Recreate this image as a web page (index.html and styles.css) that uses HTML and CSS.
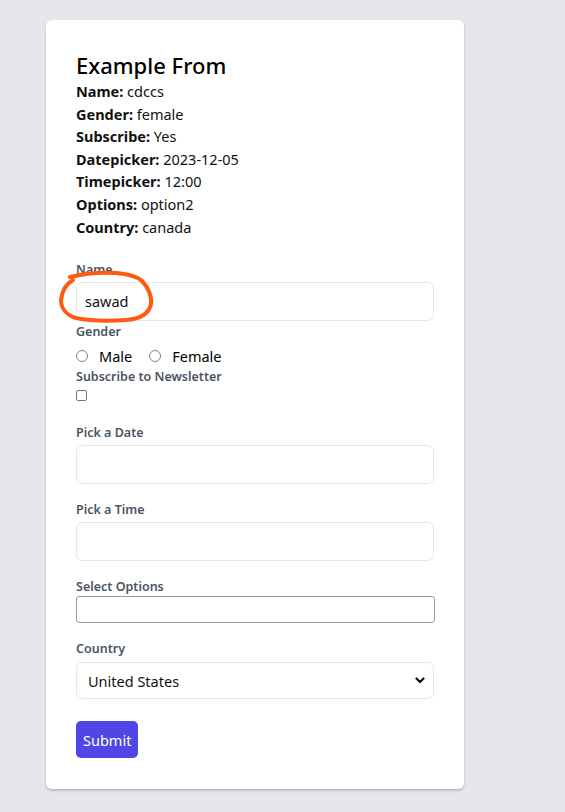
FILE: index.html
```html
<!DOCTYPE html>
<html lang="en">
<head>
<meta charset="utf-8">
<title>Example From</title>
<link rel="stylesheet" href="styles.css">
</head>
<body>
<div class="page">
  <div class="card">
    <h1 class="title">Example From</h1>
    <div class="summary">
      <p><b>Name:</b> cdccs</p>
      <p><b>Gender:</b> female</p>
      <p><b>Subscribe:</b> Yes</p>
      <p><b>Datepicker:</b> 2023-12-05</p>
      <p><b>Timepicker:</b> 12:00</p>
      <p><b>Options:</b> option2</p>
      <p><b>Country:</b> canada</p>
    </div>
    <form class="form">
      <div class="group tight">
        <label class="label">Name</label>
        <div class="name-wrap">
          <div class="input">sawad</div>
          <svg class="scribble" width="110" height="66" viewBox="0 0 110 66">
            <path d="M14 15 C 30 11, 45 10, 60 11 C 72 12, 82 15, 86 19 C 92 25, 96 34, 95 42 C 93 52, 84 57, 70 58 C 55 59, 35 59, 20 56 C 10 53, 5 46, 5 38 C 6 29, 10 22, 17 18" fill="none" stroke="#ff5a0f" stroke-width="4" stroke-linecap="round" stroke-linejoin="round"/>
          </svg>
        </div>
      </div>
      <div class="group tight gender">
        <label class="label">Gender</label>
        <div class="radios">
          <span class="radio"></span><span class="opt">Male</span>
          <span class="radio"></span><span class="opt">Female</span>
        </div>
      </div>
      <div class="group subscribe">
        <label class="label">Subscribe to Newsletter</label>
        <span class="check"></span>
      </div>
      <div class="group">
        <label class="label">Pick a Date</label>
        <div class="input"></div>
      </div>
      <div class="group">
        <label class="label">Pick a Time</label>
        <div class="input"></div>
      </div>
      <div class="group">
        <label class="label flush">Select Options</label>
        <div class="plain-input"></div>
      </div>
      <div class="group">
        <label class="label loose">Country</label>
        <div class="select">
          <span>United States</span>
          <svg class="chev" width="10" height="7" viewBox="0 0 10 7"><path d="M1.5 1.5 L5 5 L8.5 1.5" fill="none" stroke="#111" stroke-width="2.2" stroke-linecap="round" stroke-linejoin="round"/></svg>
        </div>
      </div>
      <div class="actions">
        <button type="button" class="btn">Submit</button>
      </div>
    </form>
  </div>
</div>
</body>
</html>
```
FILE: styles.css
```css
* { box-sizing: border-box; }
html, body { margin: 0; padding: 0; }
body {
  background: #e5e7eb;
  font-family: "Noto Sans", "Open Sans", sans-serif;
  color: #111;
}
.page {
  padding: 20px 0 0 46px;
  height: 812px;
}
.card {
  width: 418px;
  background: #fff;
  border-radius: 6px;
  box-shadow: 0 2px 3px rgba(0,0,0,0.15), 0 1px 2px rgba(0,0,0,0.08);
  padding: 30px 30px 31px;
}
.title {
  margin: 0;
  font-size: 22px;
  font-weight: 500;
  line-height: 30px;
  color: #000;
}
.summary p {
  margin: 0;
  font-size: 14.5px;
  line-height: 22.6px;
}
.summary b { font-weight: 700; }
.form { margin-top: 23px; }
.group { margin-bottom: 17px; }
.group.tight { margin-bottom: 0; }
.group.gender { padding-top: 2px; }
.group.subscribe { margin-bottom: 23px; }
.label {
  display: block;
  font-size: 12.5px;
  line-height: 18px;
  font-weight: 600;
  color: #4b5563;
  margin-bottom: 3px;
}
.label.flush { margin-bottom: 0; }
.label.loose { margin-bottom: 4px; }
.name-wrap { position: relative; }
.input {
  height: 39px;
  border: 1px solid #e5e7eb;
  border-radius: 6px;
  padding: 0 8px;
  font-size: 14.5px;
  line-height: 37px;
}
.scribble {
  position: absolute;
  left: -20px;
  top: -20px;
}
.radios {
  display: flex;
  align-items: center;
  height: 24px;
  font-size: 14.5px;
  color: #000;
}
.radio {
  width: 12px;
  height: 12px;
  border: 1px solid #858585;
  border-radius: 50%;
  margin-right: 11px;
}
.opt { margin-right: 17px; }
.check {
  display: block;
  width: 11px;
  height: 11px;
  border: 1px solid #767676;
  border-radius: 2px;
  margin-top: 4px;
}
.plain-input {
  height: 27px;
  width: 359px;
  border: 1px solid #9a9a9a;
  border-radius: 3px;
}
.select {
  height: 37px;
  border: 1px solid #e5e7eb;
  border-radius: 6px;
  padding: 0 8px 0 11px;
  display: flex;
  align-items: center;
  justify-content: space-between;
  font-size: 14.5px;
}
.actions { padding-top: 5px; }
.btn {
  font-family: inherit;
  background: #4f46e5;
  color: #fff;
  border: none;
  border-radius: 5px;
  height: 37px;
  padding: 0 7px;
  font-size: 14.5px;
}
```
